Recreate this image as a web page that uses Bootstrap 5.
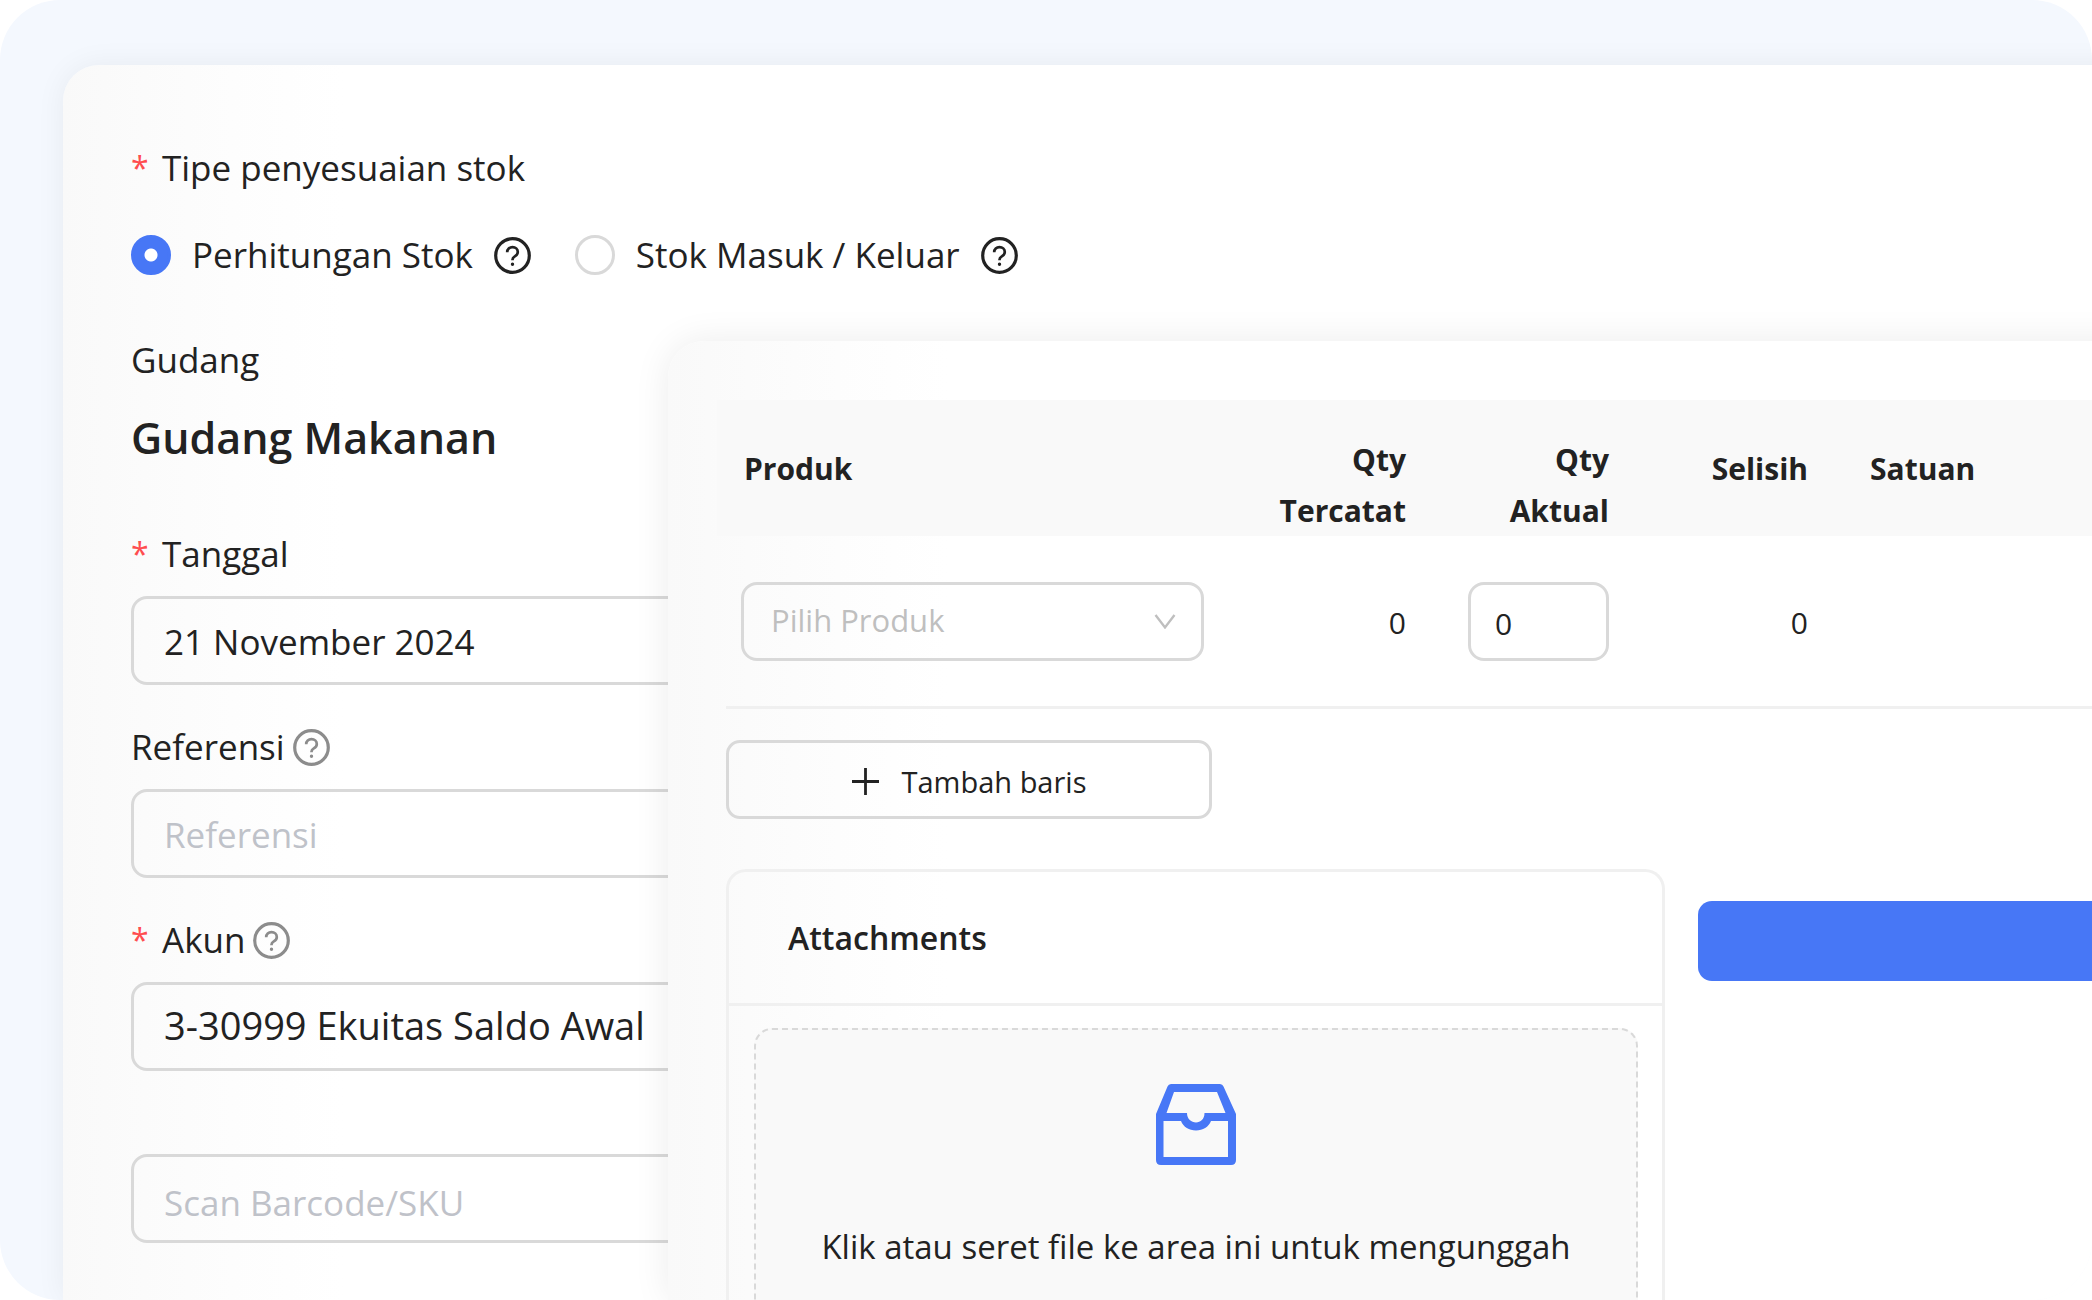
<!DOCTYPE html>
<html lang="id">
<head>
<meta charset="utf-8">
<meta name="viewport" content="width=device-width, initial-scale=1">
<title>Penyesuaian Stok</title>
<link href="https://cdn.jsdelivr.net/npm/bootstrap@5.3.0/dist/css/bootstrap.min.css" rel="stylesheet">
<style>
  :root { --ink: #222; --line: #d9d9d9; --soft: #f0f0f0; --brand: #4777f6; }
  body { font-family: "Open Sans", "Noto Sans", sans-serif; font-size: 35px; line-height: 48px; color: var(--ink); background: #fff; }
  .stage { min-height: 100vh; height: 100vh; background: #f4f8fe; border-radius: 60px; padding: 65px 0 0 63px; }
  .sheet { margin-right: -40px; border-radius: 36px 0 0 0; background: linear-gradient(90deg, #f9f9f9 0, #fbfbfb 80px, #fdfdfd 170px, #fff 280px); box-shadow: 0 0 30px rgba(0, 0, 0, .06); }
  .main-sheet { padding: 79px 68px 0; }
  .front-sheet { top: 341px; left: 668px; padding: 59px 0 0 49px; box-shadow: 0 0 36px rgba(0, 0, 0, .08); }

  .req::before { content: "*"; color: #ff4d4f; font-size: 32px; width: 31px; flex: none; }
  .type-row { gap: 44px; margin: 39px 0 57px; }
  .type-row .choice { gap: 21px; }
  .type-row label { gap: 21px; }
  .dot { appearance: none; width: 40px; height: 40px; border: 3px solid var(--line); border-radius: 50%; margin: 0; background: #fff; flex: none; }
  .dot:checked { border-color: var(--brand); background: radial-gradient(circle, #fff 6px, var(--brand) 7px); }
  .help { width: 37px; height: 37px; flex: none; fill: none; stroke: currentColor; }
  .help-muted { color: #8c8c8c; }
  .store-name { font-size: 43px; line-height: 64px; font-weight: 600; margin: 22px 0 60px; }

  .entry { margin-bottom: 38px; }
  .entry .caption { gap: 8px; margin-bottom: 18px; }
  .box { display: block; width: 100%; border: 3px solid var(--line); border-radius: 16px; background: transparent; color: var(--ink); outline: 0; appearance: none; }
  .box::placeholder { color: #bfc2c9; opacity: 1; }
  .box-lg { height: 89px; padding: 2px 30px 0; }
  .box-account { font-size: 38px; padding: 0 30px 4px; }
  .entry-scan { margin-top: 83px; }
  .entry-scan .box { padding-top: 8px; }

  .items { width: 100%; table-layout: fixed; font-size: 30px; line-height: 51px; }
  .items thead { background: #f9f9f9; }
  .items th { padding: 34px 31px 0; vertical-align: top; font-weight: 700; height: 135px; }
  .items th.single { padding-top: 43px; }
  .items td { padding: 46px 31px 42px; line-height: 82px; vertical-align: top; }
  .items th:first-child { padding-left: 27px; }
  .items td:first-child { padding-left: 24px; padding-right: 24px; }
  .box-sm { height: 79px; padding: 4px 24px 0; font-size: 30px; line-height: 50px; }
  .box-pick { color: #bfbfbf; font-size: 31px; padding: 0 60px 3px 27px; }
  .chev { right: 28px; top: 32px; width: 22px; height: 15px; pointer-events: none; }

  .below { margin-left: 9px; border-top: 3px solid var(--soft); padding-top: 31px; }
  .add-row { width: 486px; height: 79px; border: 3px solid var(--line); border-radius: 14px; background: transparent; color: var(--ink); font-size: 29px; gap: 23px; padding: 4px 0 0; }
  .lower { margin-top: 50px; gap: 33px; }
  .attach { width: 939px; flex: none; border: 3px solid var(--soft); border-bottom: 0; border-radius: 20px 20px 0 0; }
  .attach h2 { font-size: 32px; font-weight: 600; line-height: 131px; padding: 0 59px; margin: 0; border-bottom: 3px solid var(--soft); }
  .drop { margin: 22px 24px 0 25px; height: 400px; padding-top: 54px; border: 2px dashed var(--line); border-radius: 18px; background: #f9f9f9; font-size: 33px; line-height: 53px; gap: 55px; cursor: pointer; }
  .save { height: 80px; margin-top: 32px; background: var(--brand); border: 0; border-radius: 14px 0 0 14px; }
</style>
</head>
<body class="overflow-hidden">
<svg class="d-none" aria-hidden="true">
  <symbol id="ask" viewBox="0 0 37 37">
    <circle cx="18.5" cy="18.5" r="16.8" stroke-width="3.2"/>
    <path d="M13.2 15.2c0-3 2.3-5 5.3-5s5.3 1.9 5.3 4.7c0 2.2-1.3 3.5-3 4.5-1.6.9-2.3 1.7-2.3 3.3v.6" stroke-width="2.7"/>
    <circle cx="18.5" cy="27.2" r="1.1" fill="currentColor" stroke-width="1.2"/>
  </symbol>
</svg>

<div class="stage position-relative overflow-hidden">
  <form class="sheet main-sheet h-100">
    <div class="req d-flex" id="typeLabel">Tipe penyesuaian stok</div>
    <div class="type-row d-flex align-items-center" role="radiogroup" aria-labelledby="typeLabel">
      <div class="choice d-flex align-items-center">
        <label class="d-flex align-items-center"><input class="dot" type="radio" name="type" checked>Perhitungan Stok</label>
        <svg class="help"><use href="#ask"/></svg>
      </div>
      <div class="choice d-flex align-items-center">
        <label class="d-flex align-items-center"><input class="dot" type="radio" name="type">Stok Masuk / Keluar</label>
        <svg class="help"><use href="#ask"/></svg>
      </div>
    </div>

    <div>Gudang</div>
    <h1 class="store-name">Gudang Makanan</h1>

    <div class="entry">
      <div class="caption d-flex align-items-center"><label class="req d-flex" for="date">Tanggal</label></div>
      <input class="box box-lg" id="date" type="text" value="21 November 2024">
    </div>
    <div class="entry">
      <div class="caption d-flex align-items-center"><label for="ref">Referensi</label><svg class="help help-muted"><use href="#ask"/></svg></div>
      <input class="box box-lg" id="ref" type="text" placeholder="Referensi">
    </div>
    <div class="entry">
      <div class="caption d-flex align-items-center"><label class="req d-flex" for="account">Akun</label><svg class="help help-muted"><use href="#ask"/></svg></div>
      <select class="box box-lg box-account" id="account"><option>3-30999 Ekuitas Saldo Awal</option></select>
    </div>
    <div class="entry-scan">
      <input class="box box-lg" type="text" placeholder="Scan Barcode/SKU" aria-label="Scan Barcode/SKU">
    </div>
  </form>

  <section class="sheet front-sheet position-absolute end-0 bottom-0 overflow-hidden">
    <table class="items">
      <colgroup><col style="width:511px"><col style="width:209px"><col style="width:203px"><col style="width:199px"><col></colgroup>
      <thead>
        <tr>
          <th class="single">Produk</th>
          <th class="text-end">Qty<br>Tercatat</th>
          <th class="text-end">Qty<br>Aktual</th>
          <th class="single text-end">Selisih</th>
          <th class="single">Satuan</th>
        </tr>
      </thead>
      <tbody>
        <tr>
          <td>
            <div class="position-relative">
              <select class="box box-sm box-pick" aria-label="Produk"><option>Pilih Produk</option></select>
              <svg class="chev position-absolute" viewBox="0 0 22 15" fill="none" stroke="#bfbfbf" stroke-width="2.4"><path d="M1.5 1 11 13.4 20.5 1"/></svg>
            </div>
          </td>
          <td class="text-end">0</td>
          <td><input class="box box-sm" type="text" value="0" aria-label="Qty Aktual"></td>
          <td class="text-end">0</td>
          <td></td>
        </tr>
      </tbody>
    </table>

    <div class="below">
      <button class="add-row d-flex align-items-center justify-content-center" type="button">
        <svg width="27" height="27" viewBox="0 0 27 27" stroke="#222" stroke-width="2.8"><path d="M13.5 0v27M0 13.5h27"/></svg>
        Tambah baris
      </button>
      <div class="lower d-flex align-items-start">
        <div class="attach">
          <h2>Attachments</h2>
          <label class="drop d-flex flex-column align-items-center">
            <input class="visually-hidden" type="file">
            <svg width="80" height="81" viewBox="0 0 80 81" fill="#4777f6" fill-rule="evenodd"><path d="M0 30 11.5 2.500Q12.500 0 15 0H64Q66.500 0 67.500 2.500L80 30V76Q80 81 75 81H5Q0 81 0 76ZM18 8H61L69.500 29H48.500C48.500 35 44.500 38.500 40 38.500S31 35 31 29H10.500ZM7.500 37H25C27.500 43 33 46.500 40 46.500S52.500 43 55 37H72V73H7.500Z"/></svg>
            <span>Klik atau seret file ke area ini untuk mengunggah</span>
          </label>
        </div>
        <button class="save flex-grow-1" type="button" aria-label="Simpan"></button>
      </div>
    </div>
  </section>
</div>
<script src="https://cdn.jsdelivr.net/npm/bootstrap@5.3.0/dist/js/bootstrap.bundle.min.js"></script>
</body>
</html>
